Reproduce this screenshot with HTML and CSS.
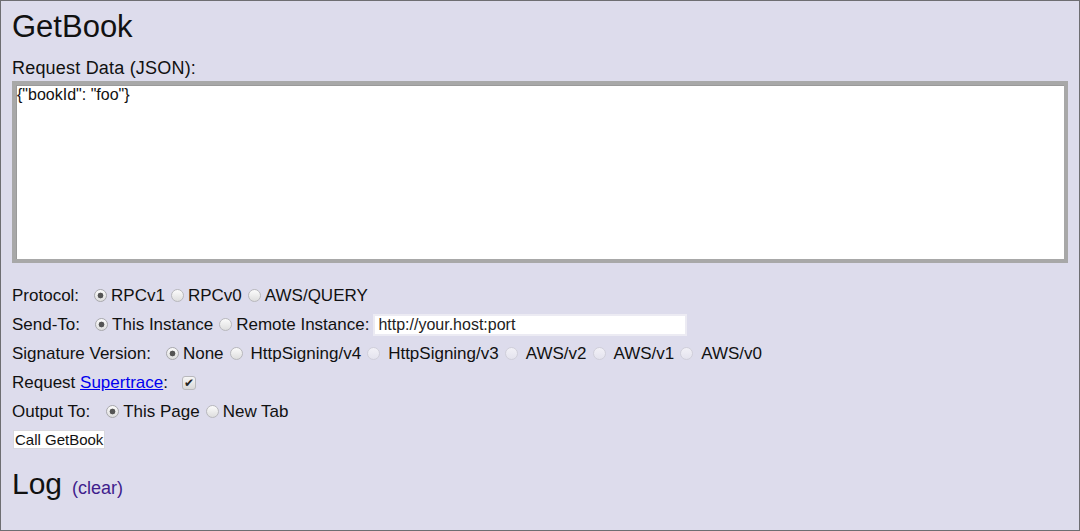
FILE: index.html
```html
<!DOCTYPE html>
<html>
<head>
<meta charset="utf-8">
<link rel="stylesheet" href="styles.css">
</head>
<body>
<div class="page">
  <h1 class="title">GetBook</h1>
  <div class="label">Request Data (JSON):</div>
  <textarea class="data">{"bookId": "foo"}</textarea>
  <div class="row">
    <span class="name">Protocol:</span>
    <input type="radio" class="radio r-first" name="p" checked><span>RPCv1</span>
    <input type="radio" class="radio" name="p"><span>RPCv0</span>
    <input type="radio" class="radio" name="p"><span>AWS/QUERY</span>
  </div>
  <div class="row">
    <span class="name">Send-To:</span>
    <input type="radio" class="radio r-send" name="s" checked><span>This Instance</span>
    <input type="radio" class="radio" name="s"><span>Remote Instance:</span>
    <input type="text" class="remote" value="http://your.host:port">
  </div>
  <div class="row sig">
    <span class="name">Signature Version:</span>
    <input type="radio" class="radio r-sig" name="v" checked><span>None</span>
    <input type="radio" class="radio" name="v"><span>HttpSigning/v4</span>
    <input type="radio" class="radio" name="v" disabled><span>HttpSigning/v3</span>
    <input type="radio" class="radio" name="v" disabled><span>AWS/v2</span>
    <input type="radio" class="radio" name="v" disabled><span>AWS/v1</span>
    <input type="radio" class="radio" name="v" disabled><span>AWS/v0</span>
  </div>
  <div class="row">
    <span>Request <a href="#" class="link">Supertrace</a>:</span>
    <input type="checkbox" class="check" checked>
  </div>
  <div class="row">
    <span class="name">Output To:</span>
    <input type="radio" class="radio r-out" name="o" checked><span>This Page</span>
    <input type="radio" class="radio" name="o"><span>New Tab</span>
  </div>
  <div class="btn-row"><button class="call">Call GetBook</button></div>
  <div class="log"><span class="log-title">Log</span><a href="#" class="clear">(clear)</a></div>
</div>
</body>
</html>
```
FILE: styles.css
```css
html, body {
  margin: 0;
  padding: 0;
}
body {
  font-family: "Liberation Sans", Arial, sans-serif;
  color: #111;
}
.page {
  box-sizing: border-box;
  width: 1080px;
  height: 531px;
  border: 1px solid #6e6e72;
  background: #dddcec;
  padding: 9px 12px 0 11px;
}
.title {
  font-size: 31px;
  font-weight: normal;
  line-height: 34px;
  margin: 0 0 15px 0;
  color: #111;
}
.label {
  font-size: 18px;
  letter-spacing: 0.2px;
  line-height: 18px;
  margin-bottom: 4px;
}
.data {
  display: block;
  box-sizing: border-box;
  width: 1056px;
  height: 182px;
  border: 4px solid #a8a8a8;
  box-shadow: inset 1px 1px 0 #9a9a9a;
  background: #fff;
  font-family: "Liberation Sans", Arial, sans-serif;
  font-size: 16px;
  line-height: 18px;
  padding: 1px 1px;
  resize: none;
  color: #111;
  margin: 0 0 18px 0;
}
.row {
  display: flex;
  align-items: center;
  height: 29px;
  font-size: 17px;
  white-space: pre;
}
.radio {
  appearance: none;
  -webkit-appearance: none;
  box-sizing: border-box;
  width: 13px;
  height: 13px;
  margin: 0 4px 0 6px;
  border: 1px solid #b8b8bc;
  border-radius: 50%;
  background: linear-gradient(#fbfbfb, #dedede);
  flex: none;
}
.radio:checked {
  background: radial-gradient(circle, #555 0 2.6px, transparent 3.2px), linear-gradient(#fbfbfb, #dedede);
  border-color: #a8a8ac;
}
.radio:disabled {
  background: linear-gradient(#f2f1f7, #e4e3ee);
  border-color: #d0cfda;
}
.r-first { margin-left: 15px; }
.r-send { margin-left: 15px; }
.r-out { margin-left: 16px; }
.sig .radio { margin-left: 6px; margin-right: 8px; }
.sig .r-sig { margin-left: 15px; margin-right: 4px; }
.remote {
  box-sizing: border-box;
  width: 314px;
  height: 22px;
  margin-left: 4px;
  border: 2px solid #ecebf3;
  background: #fff;
  font-family: "Liberation Sans", Arial, sans-serif;
  font-size: 16px;
  padding: 0 3px;
  color: #222;
  outline: none;
}
.link {
  color: #0000ee;
  text-decoration: underline;
}
.check {
  appearance: none;
  -webkit-appearance: none;
  box-sizing: border-box;
  width: 14px;
  height: 14px;
  margin: 0 0 0 14px;
  border: 1px solid #b8b8bc;
  border-radius: 3px;
  background: linear-gradient(#f6f6f6, #d8d8d8);
  position: relative;
  flex: none;
}
.check:checked::after {
  content: "\2714";
  position: absolute;
  left: 1px;
  top: -2px;
  font-size: 12px;
  line-height: 16px;
  color: #222;
  font-family: "DejaVu Sans", sans-serif;
}
.btn-row {
  height: 21px;
  display: flex;
  align-items: center;
  margin-top: 3px;
}
.call {
  box-sizing: border-box;
  height: 19px;
  padding: 0 1px;
  margin-left: 1px;
  background: #fff;
  border: 1px solid #d8d8de;
  border-radius: 0;
  font-family: "Liberation Sans", Arial, sans-serif;
  font-size: 15px;
  color: #111;
}
.log {
  margin-top: 17px;
  display: flex;
  align-items: baseline;
}
.log-title {
  font-size: 30px;
  line-height: 34px;
}
.clear {
  font-size: 18px;
  color: #3f1d8c;
  text-decoration: none;
  margin-left: 10px;
}
```
